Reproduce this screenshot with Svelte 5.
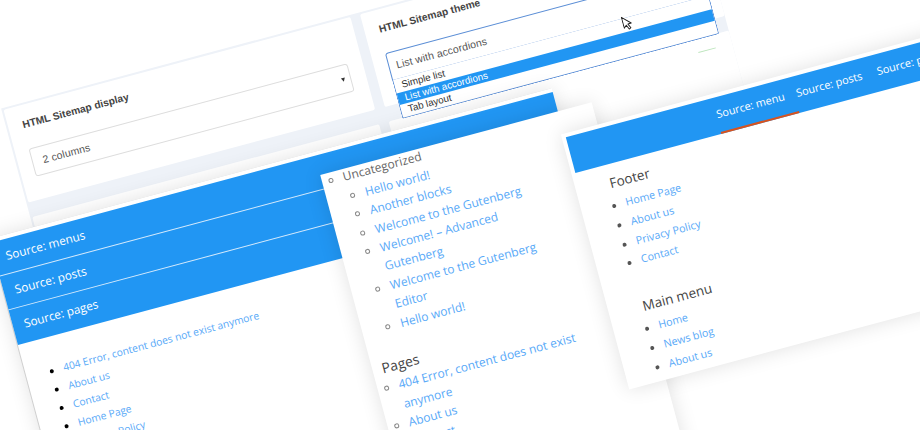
<script>
    const categorized = [
        "Hello world!",
        "Another blocks",
        "Welcome to the Gutenberg",
        "Welcome! – Advanced Gutenberg",
        "Welcome to the Gutenberg Editor",
        "Hello world!",
    ];
    const pages = ["404 Error, content does not exist anymore", "About us", "Contact", "Home Page", "Privacy Policy"];
    const footer = ["Home Page", "About us", "Privacy Policy", "Contact"];
    const mainMenu = ["Home", "News blog", "About us"];
    const options = ["Simple list", "List with accordions", "Tab layout"];
</script>

<div class="page">
    <div class="stage">
        <section class="settings">
            <div class="card">
                <div class="label">HTML Sitemap display</div>
                <div class="select">2 columns<span class="arrow"></span></div>
            </div>
            <div class="card">
                <div class="label">HTML Sitemap theme</div>
                <div class="select open">
                    List with accordions
                    <div class="dropdown">
                        {#each options as option, i}
                            <div class="option" class:selected={i === 1}>{option}</div>
                        {/each}
                    </div>
                </div>
            </div>
            <div class="card low"></div>
            <div class="card low"><div class="toggle-edge"></div></div>
        </section>

        <section class="panel accordion">
            <div class="rows">
                <div class="row">Source: menus</div>
                <div class="row">Source: posts</div>
                <div class="row">Source: pages</div>
            </div>
            <ul class="links">
                {#each pages as page}
                    <li><a href="#top">{page}</a></li>
                {/each}
            </ul>
        </section>

        <section class="panel tree">
            <ul class="outer">
                <li>
                    Uncategorized
                    <ul>
                        {#each categorized as post}
                            <li><a href="#top">{post}</a></li>
                        {/each}
                    </ul>
                </li>
            </ul>
            <h4>Pages</h4>
            <ul class="flat">
                {#each pages as page}
                    <li><a href="#top">{page}</a></li>
                {/each}
            </ul>
        </section>

        <section class="panel tabs">
            <nav>
                <span class="tab active">Source: menu</span>
                <span class="tab">Source: posts</span>
                <span class="tab">Source: pages</span>
            </nav>
            <div class="content">
                <h4>Footer</h4>
                <ul>
                    {#each footer as item}
                        <li><a href="#top">{item}</a></li>
                    {/each}
                </ul>
                <h4 class="second">Main menu</h4>
                <ul>
                    {#each mainMenu as item}
                        <li><a href="#top">{item}</a></li>
                    {/each}
                </ul>
            </div>
        </section>

        <svg class="cursor" width="10" height="15" viewBox="0 0 9 14">
            <path d="M0.5 0.5 L0.5 11 L3 8.8 L4.8 13 L6.6 12.2 L4.8 8.2 L8 8 Z" fill="#fff" stroke="#222" stroke-width="0.9" stroke-linejoin="round" />
        </svg>
    </div>
</div>

<style>
    :global(body) {
        margin: 0;
        background: #fff;
    }

    .page {
        position: relative;
        width: 920px;
        height: 430px;
        overflow: hidden;
        background: #fff;
    }

    /* everything in the shot is tilted the same way, so one rotated canvas holds the windows */
    .stage {
        position: absolute;
        left: 0;
        top: 0;
        width: 0;
        height: 0;
        transform: rotate(-15deg);
        transform-origin: 0 0;
    }

    .settings {
        position: absolute;
        left: -27.5px;
        top: 105px;
        width: 723px;
        box-sizing: border-box;
        padding: 2px 0 0 2px;
        display: grid;
        grid-template-columns: 359px 352px;
        grid-auto-rows: auto;
        column-gap: 10px;
        row-gap: 15px;
        background: #eef2f8;
        font-family: "Liberation Sans", Arial, sans-serif;
    }

    .card {
        box-sizing: border-box;
        height: 95.5px;
        padding: 13px 14.5px;
        background: #fff;
        border-radius: 2px;
    }

    .card.low {
        height: 120px;
        padding-top: 13px;
    }

    .toggle-edge {
        width: 18px;
        height: 1px;
        margin-left: 302.5px;
        background: #bde5bd;
    }

    .label {
        padding-left: 0.5px;
        font-size: 10.3px;
        font-weight: bold;
        line-height: 14px;
        margin-bottom: 16.5px;
        color: #444;
    }

    .select {
        position: relative;
        box-sizing: border-box;
        width: 330px;
        height: 29.5px;
        padding-left: 10px;
        line-height: 27.5px;
        font-size: 10.5px;
        letter-spacing: 0.1px;
        color: #555;
        border: 1px solid #ddd;
        border-radius: 3px;
    }

    .select.open {
        width: 328px;
        padding-left: 7px;
        border-color: #5b8ed6;
        border-radius: 3px 3px 0 0;
    }

    .arrow {
        position: absolute;
        right: 5px;
        top: 12px;
        border-left: 2.5px solid transparent;
        border-right: 2.5px solid transparent;
        border-top: 4px solid #333;
    }

    .dropdown {
        position: absolute;
        left: -1px;
        right: -1px;
        top: 27.5px;
        box-sizing: border-box;
        height: 40px;
        padding-top: 1px;
        background: #fff;
        border: 1px solid #5b8ed6;
        border-top: 0;
        border-radius: 0 0 2px 2px;
        font-size: 9.8px;
        letter-spacing: 0;
        color: #333;
    }

    .option {
        height: 12.7px;
        line-height: 12.7px;
        padding-left: 7px;
    }

    .option.selected {
        background: #2196f3;
        color: #fff;
    }

    .panel {
        position: absolute;
        box-sizing: border-box;
        background: #fff;
        font-family: "Open Sans", sans-serif;
        box-shadow: 0 0 20px rgba(0, 0, 0, 0.12);
    }

    a {
        color: #58a9f8;
        text-decoration: none;
    }

    ul {
        margin: 0;
        padding: 0;
    }

    h4 {
        margin: 0;
        font-weight: normal;
        color: #444;
    }

    .accordion {
        left: -72px;
        top: 228px;
        width: 582px;
        height: 420px;
        padding-top: 4px;
        box-shadow: 0 0 20px rgba(0, 0, 0, 0.12), -1px 0 0 #ddd;
    }

    .rows {
        background: #2196f3;
    }

    .row {
        box-sizing: border-box;
        height: 35px;
        padding-left: 11.5px;
        line-height: 33px;
        font-size: 11.8px;
        color: #fff;
        border-bottom: 1px solid #d5eafc;
    }

    .row:last-child {
        height: 36px;
        border-bottom: 0;
    }

    .links {
        margin-top: 23.5px;
        padding-left: 38px;
        font-size: 10.3px;
        line-height: 19px;
        list-style: disc;
        color: #000;
    }

    .tree {
        left: 264px;
        top: 252px;
        width: 281px;
        height: 420px;
        padding-right: 75px;
        font-size: 12px;
        line-height: 19.4px;
        color: #666;
    }

    .tree li::marker {
        color: #8a8a8a;
    }

    .tree .outer {
        margin-top: -1.6px;
        padding-left: 21.5px;
        list-style: circle;
    }

    .tree .outer ul {
        padding-left: 17.5px;
        list-style: circle;
    }

    .tree h4 {
        margin: 20.2px 0 0 9.5px;
        font-size: 14px;
        line-height: 20px;
    }

    .tree .flat {
        padding-left: 21.5px;
        list-style: circle;
    }

    .tabs {
        left: 507px;
        top: 275px;
        width: 520px;
        height: 264px;
        padding: 4px 4px 0;
    }

    nav {
        display: flex;
        height: 37px;
        padding-left: 151.5px;
        background: #2196f3;
    }

    .tab {
        box-sizing: border-box;
        width: 81px;
        margin-right: 2.5px;
        line-height: 34px;
        font-size: 10.9px;
        white-space: nowrap;
        color: #fff;
    }

    .tab.active {
        margin-left: -1px;
        padding-left: 1px;
        border-bottom: 2px solid #d9531e;
    }

    .content {
        padding: 9px 0 0 30.5px;
        font-size: 10.7px;
        line-height: 19.8px;
        color: #555;
    }

    .content h4 {
        font-size: 13.5px;
        line-height: 21px;
        margin-bottom: 2px;
    }

    .content h4.second {
        margin-top: 25px;
    }

    .content ul {
        padding-left: 10.5px;
        list-style: disc;
    }

    .cursor {
        position: absolute;
        left: 595px;
        top: 177px;
    }
</style>
